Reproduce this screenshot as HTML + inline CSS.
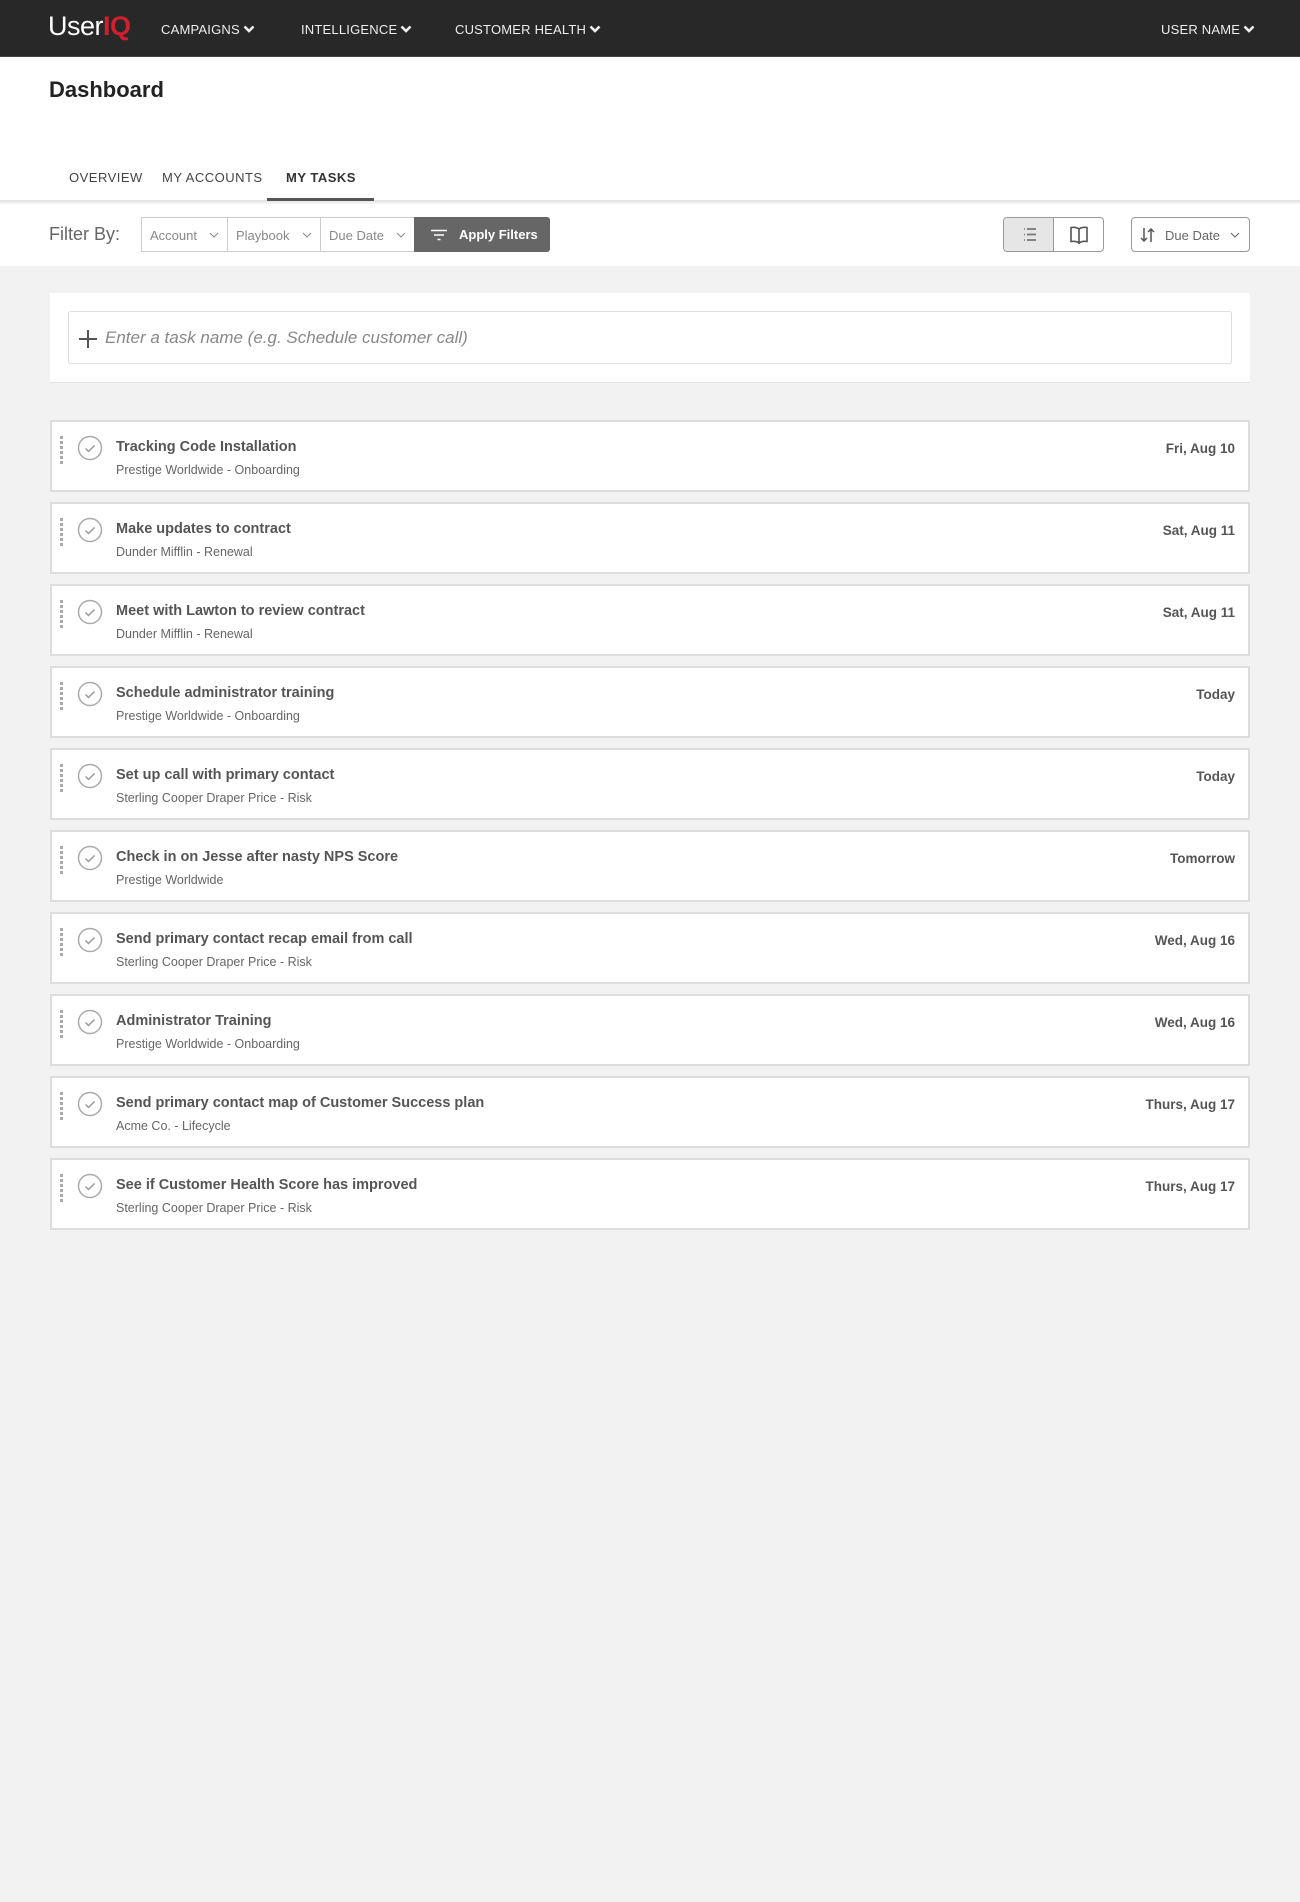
<!DOCTYPE html>
<html><head><meta charset="utf-8">
<style>
*{box-sizing:border-box;margin:0;padding:0}
body{width:1300px;height:1902px;background:#f2f2f2;font-family:"Liberation Sans",Arial,sans-serif;color:#555;position:relative;overflow:hidden}
.nav{position:absolute;left:0;top:0;width:1300px;height:57px;background:#282828;border-bottom:1px solid #444}
.logo{position:absolute;left:48px;top:11px;font-size:27px;color:#fff;letter-spacing:-0.5px}
.logo b{color:#d0202e;font-weight:bold}
.ni{position:absolute;top:22px;font-size:13px;color:#eee;letter-spacing:0.2px}
.ni svg{vertical-align:0px;margin-left:3px}
.head{position:absolute;left:0;top:57px;width:1300px;height:145px;background:#fff;border-bottom:2px solid #e6e6e6}
.title{position:absolute;left:49px;top:20px;font-size:22px;font-weight:bold;color:#222}
.tab{position:absolute;top:113px;font-size:13px;color:#444;letter-spacing:0.5px}
.tab.act{font-weight:bold;color:#333}
.ul{position:absolute;left:267px;top:141px;width:107px;height:3px;background:#555}
.fbar{position:absolute;left:0;top:204px;width:1300px;height:62px;background:#fff}
.fl{position:absolute;left:49px;top:20px;font-size:18px;color:#666}
.sel{position:absolute;top:13px;height:35px;border:1px solid #ccc;background:#fff;font-size:13px;color:#888;padding:10px 0 0 8px}
.sel svg{position:absolute;right:8px;top:14px}
.apply{position:absolute;top:13px;height:35px;background:#666;border-radius:0 3px 3px 0;color:#fff;font-weight:bold;font-size:13px;padding:10px 0 0 36px}
.apply svg{position:absolute;top:12px}
.tog{position:absolute;left:1003px;top:13px;width:101px;height:35px;border:1px solid #999;border-radius:4px;overflow:hidden;background:#fff}
.tog .a{position:absolute;left:0;top:0;width:50px;height:33px;background:#e6e6e6;border-right:1px solid #999}
.sort{position:absolute;left:1131px;top:13px;width:119px;height:35px;border:1px solid #999;border-radius:4px;font-size:13px;color:#666;padding:10px 0 0 33px}
.panel{position:absolute;left:50px;top:293px;width:1200px;height:90px;background:#fff;border-bottom:1px solid #e2e2e2}
.inp{position:absolute;left:18px;top:18px;width:1164px;height:53px;border:1px solid #ddd;border-radius:3px;font-size:17px;font-style:italic;color:#888;padding:16px 0 0 36px}
.inp svg{position:absolute;left:8px;top:16px}
.row{position:absolute;left:50px;width:1200px;height:72px;background:#fff;border:2px solid #ddd}
.drag{position:absolute;left:8px;top:14px;width:3px;height:28px;background:repeating-linear-gradient(#aaa 0 3px,transparent 3px 5px)}
.chk{position:absolute;left:25px;top:13px}
.rt{position:absolute;left:64px;top:17px;font-size:14.5px;font-weight:bold;color:#555}
.rs{position:absolute;left:64px;top:41px;font-size:12.5px;color:#666}
.rd{position:absolute;right:13px;top:19px;font-size:13.5px;font-weight:bold;color:#555}
</style></head><body>
<div class="nav">
<div class="logo">User<b>IQ</b></div>
<div class="ni" style="left:161px">CAMPAIGNS<svg width="12" height="9" viewBox="0 0 12 9"><path d="M1.5 1.5l4.5 4.5 4.5-4.5" stroke="#eee" stroke-width="2.6" fill="none"/></svg></div>
<div class="ni" style="left:301px">INTELLIGENCE<svg width="12" height="9" viewBox="0 0 12 9"><path d="M1.5 1.5l4.5 4.5 4.5-4.5" stroke="#eee" stroke-width="2.6" fill="none"/></svg></div>
<div class="ni" style="left:455px">CUSTOMER HEALTH<svg width="12" height="9" viewBox="0 0 12 9"><path d="M1.5 1.5l4.5 4.5 4.5-4.5" stroke="#eee" stroke-width="2.6" fill="none"/></svg></div>
<div class="ni" style="left:1161px">USER NAME<svg width="12" height="9" viewBox="0 0 12 9"><path d="M1.5 1.5l4.5 4.5 4.5-4.5" stroke="#eee" stroke-width="2.6" fill="none"/></svg></div>
</div>
<div class="head">
<div class="title">Dashboard</div>
<div class="tab" style="left:69px">OVERVIEW</div>
<div class="tab" style="left:162px">MY ACCOUNTS</div>
<div class="tab act" style="left:286px">MY TASKS</div>
<div class="ul"></div>
</div>
<div class="fbar">
<div class="fl">Filter By:</div>
<div class="sel" style="left:141px;width:87px">Account<svg width="10" height="6" viewBox="0 0 10 6"><path d="M1 1l4 4 4-4" stroke="#888" fill="none"/></svg></div>
<div class="sel" style="left:227px;width:94px">Playbook<svg width="10" height="6" viewBox="0 0 10 6"><path d="M1 1l4 4 4-4" stroke="#888" fill="none"/></svg></div>
<div class="sel" style="left:320px;width:95px">Due Date<svg width="10" height="6" viewBox="0 0 10 6"><path d="M1 1l4 4 4-4" stroke="#888" fill="none"/></svg></div>
<div class="apply" style="left:414px;width:136px;padding-left:45px"><svg width="18" height="12" viewBox="0 0 18 12" style="left:16px"><path d="M1 1.5h16M4 6h10M7.5 10.5h3" stroke="#fff" stroke-width="1.6"/></svg>Apply Filters</div>
<div class="tog"><div class="a"><svg width="50" height="33" viewBox="0 0 50 33"><path d="M20 11h1M20 16.5h1M20 22h1" stroke="#777" stroke-width="1.4"/><path d="M23 11h9M23 16.5h9M23 22h9" stroke="#777" stroke-width="1.8"/></svg></div>
<svg style="position:absolute;left:50px;top:0" width="50" height="33" viewBox="0 0 50 33"><path d="M25 11c-2-1.5-5-2-8-1.5v14c3-.5 6 0 8 1.5c2-1.5 5-2 8-1.5v-14c-3-.5-6 0-8 1.5zM25 11v15" stroke="#555" stroke-width="1.6" fill="none"/></svg></div>
<div class="sort"><svg style="position:absolute;left:8px;top:9px" width="16" height="16" viewBox="0 0 16 16"><path d="M4 1v13M1 11l3 3 3-3M11 15V2M8 5l3-3 3 3" stroke="#555" stroke-width="1.5" fill="none"/></svg>Due Date<svg style="position:absolute;right:9px;top:14px" width="10" height="6" viewBox="0 0 10 6"><path d="M1 1l4 4 4-4" stroke="#666" fill="none"/></svg></div>
</div>
<div class="panel"><div class="inp"><svg width="22" height="22" viewBox="0 0 22 22"><path d="M11 2v18M2 11h18" stroke="#555" stroke-width="2"/></svg>Enter a task name (e.g. Schedule customer call)</div></div>

<div class="row" style="top:420px"><div class="drag"></div><svg class="chk" width="26" height="26" viewBox="0 0 26 26"><circle cx="13" cy="13" r="11.5" stroke="#aaa" stroke-width="1.5" fill="none"/><path d="M8.5 13.5l3 3 6-6" stroke="#999" stroke-width="1.5" fill="none"/></svg><div class="rt">Tracking Code Installation</div><div class="rs">Prestige Worldwide - Onboarding</div><div class="rd">Fri, Aug 10</div></div>
<div class="row" style="top:502px"><div class="drag"></div><svg class="chk" width="26" height="26" viewBox="0 0 26 26"><circle cx="13" cy="13" r="11.5" stroke="#aaa" stroke-width="1.5" fill="none"/><path d="M8.5 13.5l3 3 6-6" stroke="#999" stroke-width="1.5" fill="none"/></svg><div class="rt">Make updates to contract</div><div class="rs">Dunder Mifflin - Renewal</div><div class="rd">Sat, Aug 11</div></div>
<div class="row" style="top:584px"><div class="drag"></div><svg class="chk" width="26" height="26" viewBox="0 0 26 26"><circle cx="13" cy="13" r="11.5" stroke="#aaa" stroke-width="1.5" fill="none"/><path d="M8.5 13.5l3 3 6-6" stroke="#999" stroke-width="1.5" fill="none"/></svg><div class="rt">Meet with Lawton to review contract</div><div class="rs">Dunder Mifflin - Renewal</div><div class="rd">Sat, Aug 11</div></div>
<div class="row" style="top:666px"><div class="drag"></div><svg class="chk" width="26" height="26" viewBox="0 0 26 26"><circle cx="13" cy="13" r="11.5" stroke="#aaa" stroke-width="1.5" fill="none"/><path d="M8.5 13.5l3 3 6-6" stroke="#999" stroke-width="1.5" fill="none"/></svg><div class="rt">Schedule administrator training</div><div class="rs">Prestige Worldwide - Onboarding</div><div class="rd">Today</div></div>
<div class="row" style="top:748px"><div class="drag"></div><svg class="chk" width="26" height="26" viewBox="0 0 26 26"><circle cx="13" cy="13" r="11.5" stroke="#aaa" stroke-width="1.5" fill="none"/><path d="M8.5 13.5l3 3 6-6" stroke="#999" stroke-width="1.5" fill="none"/></svg><div class="rt">Set up call with primary contact</div><div class="rs">Sterling Cooper Draper Price - Risk</div><div class="rd">Today</div></div>
<div class="row" style="top:830px"><div class="drag"></div><svg class="chk" width="26" height="26" viewBox="0 0 26 26"><circle cx="13" cy="13" r="11.5" stroke="#aaa" stroke-width="1.5" fill="none"/><path d="M8.5 13.5l3 3 6-6" stroke="#999" stroke-width="1.5" fill="none"/></svg><div class="rt">Check in on Jesse after nasty NPS Score</div><div class="rs">Prestige Worldwide</div><div class="rd">Tomorrow</div></div>
<div class="row" style="top:912px"><div class="drag"></div><svg class="chk" width="26" height="26" viewBox="0 0 26 26"><circle cx="13" cy="13" r="11.5" stroke="#aaa" stroke-width="1.5" fill="none"/><path d="M8.5 13.5l3 3 6-6" stroke="#999" stroke-width="1.5" fill="none"/></svg><div class="rt">Send primary contact recap email from call</div><div class="rs">Sterling Cooper Draper Price - Risk</div><div class="rd">Wed, Aug 16</div></div>
<div class="row" style="top:994px"><div class="drag"></div><svg class="chk" width="26" height="26" viewBox="0 0 26 26"><circle cx="13" cy="13" r="11.5" stroke="#aaa" stroke-width="1.5" fill="none"/><path d="M8.5 13.5l3 3 6-6" stroke="#999" stroke-width="1.5" fill="none"/></svg><div class="rt">Administrator Training</div><div class="rs">Prestige Worldwide - Onboarding</div><div class="rd">Wed, Aug 16</div></div>
<div class="row" style="top:1076px"><div class="drag"></div><svg class="chk" width="26" height="26" viewBox="0 0 26 26"><circle cx="13" cy="13" r="11.5" stroke="#aaa" stroke-width="1.5" fill="none"/><path d="M8.5 13.5l3 3 6-6" stroke="#999" stroke-width="1.5" fill="none"/></svg><div class="rt">Send primary contact map of Customer Success plan</div><div class="rs">Acme Co. - Lifecycle</div><div class="rd">Thurs, Aug 17</div></div>
<div class="row" style="top:1158px"><div class="drag"></div><svg class="chk" width="26" height="26" viewBox="0 0 26 26"><circle cx="13" cy="13" r="11.5" stroke="#aaa" stroke-width="1.5" fill="none"/><path d="M8.5 13.5l3 3 6-6" stroke="#999" stroke-width="1.5" fill="none"/></svg><div class="rt">See if Customer Health Score has improved</div><div class="rs">Sterling Cooper Draper Price - Risk</div><div class="rd">Thurs, Aug 17</div></div>
</body></html>
